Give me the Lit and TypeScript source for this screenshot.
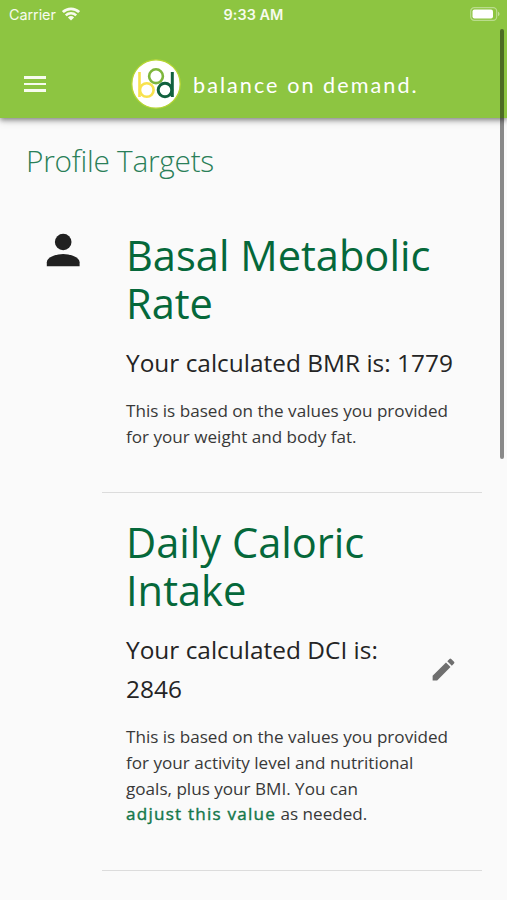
import { LitElement, html, css } from "lit";
import { customElement } from "lit/decorators.js";

@customElement("status-bar")
class StatusBar extends LitElement {
  static styles = css`
    :host { display: grid; grid-template-columns: 1fr auto 1fr; align-items: center; height: 27px; padding: 0 7px 0 9px; color: #f7fbee; font: 14.4px/27px Inter, sans-serif; }
    .left { display: flex; align-items: center; gap: 6px; }
    .carrier { letter-spacing: -0.05px; }
    .time { font-weight: 600; letter-spacing: 0.05px; padding-top: 1px; margin-left: -2px; }
    .right { display: flex; justify-content: flex-end; }
    svg { display: block; }
  `;
  render() {
    return html`
      <div class="left">
        <span class="carrier">Carrier</span>
        <svg width="18" height="14" viewBox="0 0 18 14" fill="none" stroke="currentColor">
          <path d="M.9 5.1a11.6 11.6 0 0 1 16.2 0" stroke-width="2.7" />
          <path d="M3.8 8.3a7.4 7.4 0 0 1 10.4 0" stroke-width="2.5" />
          <path d="M9 13.6 5.9 10.5a4.5 4.5 0 0 1 6.2 0Z" fill="currentColor" stroke="none" />
        </svg>
      </div>
      <span class="time">9:33 AM</span>
      <div class="right">
        <svg width="30" height="14" viewBox="0 0 30 14">
          <rect x=".7" y=".7" width="26" height="12.6" rx="3.6" fill="none" stroke="#fff" stroke-opacity=".4" stroke-width="1.2" />
          <rect x="2.5" y="2.5" width="20.5" height="9" rx="2" fill="#fff" />
          <path d="M28 4.8c2 .7 2 3.7 0 4.4Z" fill="#fff" fill-opacity=".45" />
        </svg>
      </div>
    `;
  }
}

@customElement("app-header")
class AppHeader extends LitElement {
  static styles = css`
    :host { display: block; height: 118px; background: #8dc541; box-shadow: 0 2px 5px rgba(0, 0, 0, 0.42), 0 4px 8px rgba(0, 0, 0, 0.1); }
    .bar { display: flex; align-items: center; height: 67px; padding: 23px 24px 0; }
    .menu { display: flex; flex-direction: column; gap: 4px; width: 22px; margin: 1px 85px 0 0; }
    .line { height: 2.5px; background: #f7fbee; }
    .logo { display: block; margin-right: 12px; }
    .name { color: #fff; font: 21.6px/30px Lato, sans-serif; letter-spacing: 2.05px; white-space: nowrap; padding-top: 2px; }
  `;
  render() {
    return html`
      <status-bar></status-bar>
      <div class="bar">
        <div class="menu"><div class="line"></div><div class="line"></div><div class="line"></div></div>
        <svg class="logo" width="50" height="50" viewBox="0 0 50 50" fill="none" stroke-width="2.6">
          <circle cx="25" cy="25" r="24.2" fill="#fff" stroke="#b6d632" stroke-width="1.3" />
          <g stroke="#f8e24d"><path d="M8.5 13v25" /><circle cx="15.8" cy="31" r="6.8" /></g>
          <circle cx="25" cy="17.2" r="6.9" stroke="#7eb63c" />
          <g stroke="#11613e" stroke-width="3"><path d="M41.3 13v25" /><circle cx="34" cy="31" r="6.8" /></g>
        </svg>
        <span class="name">balance on demand.</span>
      </div>
    `;
  }
}

@customElement("app-root")
class AppRoot extends LitElement {
  static styles = css`
    :host { display: block; position: relative; width: 507px; height: 900px; overflow: hidden; background: #fafafa; color: #242424; font-family: "Open Sans", sans-serif; }
    .page { padding: 22px 25px 0; }
    h1 { margin: 0; padding-left: 1px; color: #2a7f58; font-size: 29.8px; line-height: 42px; font-weight: 300; letter-spacing: -0.25px; }
    .row { display: grid; grid-template-columns: 77px 1fr; }
    .person { padding: 43px 0 0 17px; }
    .card { padding: 50px 24px 0; border-bottom: 1px solid #dcdcdc; box-sizing: border-box; }
    .card.first { height: 311px; }
    .card.second { height: 378px; padding-top: 26px; }
    h2 { margin: 0; color: #05683a; font-size: 41.6px; line-height: 47.5px; font-weight: 400; letter-spacing: 0; }
    .value { margin: 16px 0 0; font-size: 24.4px; line-height: 39px; letter-spacing: 0.02px; }
    .note { margin: 16px -10px 0 0; color: #383838; font-size: 17.1px; line-height: 25.75px; white-space: nowrap; }
    .link { color: #14774a; letter-spacing: 1.22px; -webkit-text-stroke: 0.4px #14774a; }
    .edit { display: flex; align-items: center; justify-content: space-between; }
    svg { display: block; }
    .pencil { margin: 17px 0 0; }
    .thumb { position: absolute; top: 29px; right: 3px; width: 4px; height: 430px; border-radius: 2px; background: rgba(0, 0, 0, 0.45); }
  `;
  render() {
    return html`
      <app-header></app-header>
      <main class="page">
        <h1>Profile Targets</h1>
        <section class="row">
          <div class="person">
            <svg width="42" height="50" viewBox="0 0 42 50" fill="#202020">
              <circle cx="21.2" cy="17" r="8.3" />
              <path d="M4.8 41.2v-4c0-5.5 10.9-8.3 16.4-8.3s16.4 2.8 16.4 8.3v4Z" />
            </svg>
          </div>
          <div class="card first">
            <h2>Basal Metabolic<br />Rate</h2>
            <p class="value">Your calculated BMR is: 1779</p>
            <p class="note">This is based on the values you provided<br />for your weight and body fat.</p>
          </div>
        </section>
        <section class="row">
          <div></div>
          <div class="card second">
            <h2>Daily Caloric<br />Intake</h2>
            <div class="edit">
              <p class="value">Your calculated DCI is:<br />2846</p>
              <svg class="pencil" width="29" height="29" viewBox="0 0 24 24" fill="#6f6f6f">
                <path d="M3 17.25V21h3.75L17.81 9.94l-3.75-3.75L3 17.25zM20.71 7.04a1 1 0 0 0 0-1.41l-2.34-2.34a1 1 0 0 0-1.41 0l-1.83 1.83 3.75 3.75 1.83-1.83z" />
              </svg>
            </div>
            <p class="note">This is based on the values you provided<br />for your activity level and nutritional<br />goals, plus your BMI. You can<br /><span class="link">adjust this value</span> as needed.</p>
          </div>
        </section>
      </main>
      <div class="thumb"></div>
    `;
  }
}
